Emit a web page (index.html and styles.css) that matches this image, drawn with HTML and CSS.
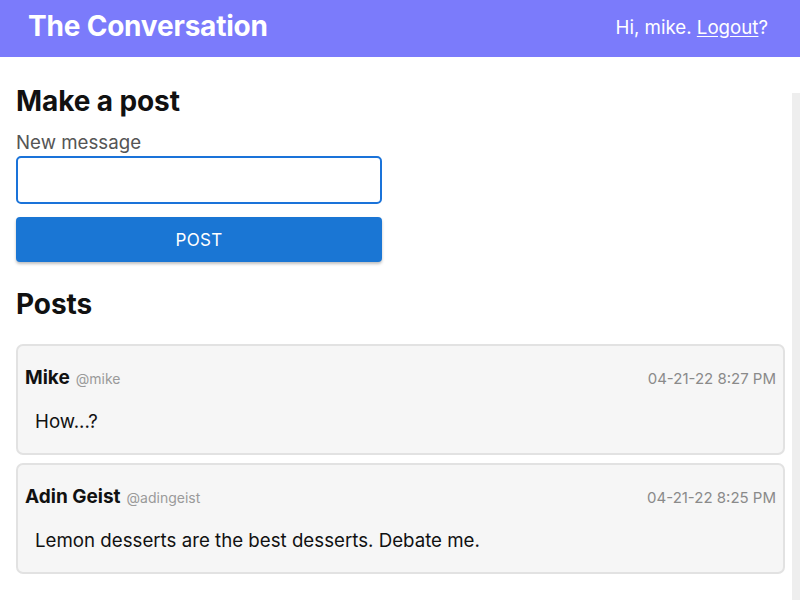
FILE: index.html
```html
<!DOCTYPE html>
<html>
<head>
<meta charset="utf-8">
<link rel="stylesheet" href="styles.css">
</head>
<body>
<header class="topbar">
  <div class="brand">The Conversation</div>
  <div class="user">Hi, mike. <a class="logout" href="#">Logout</a>?</div>
</header>
<div class="page">
  <main class="content">
    <h2 class="heading">Make a post</h2>
    <form class="post-form">
      <label class="label" for="msg">New message</label>
      <input class="input" id="msg" type="text">
      <button class="button" type="button">POST</button>
    </form>
    <h2 class="heading posts-heading">Posts</h2>
    <div class="posts">
      <div class="card">
        <div class="card-head">
          <div class="who"><span class="name">Mike</span><span class="handle">@mike</span></div>
          <div class="date">04-21-22 8:27 PM</div>
        </div>
        <p class="body">How...?</p>
      </div>
      <div class="card">
        <div class="card-head">
          <div class="who"><span class="name">Adin Geist</span><span class="handle">@adingeist</span></div>
          <div class="date">04-21-22 8:25 PM</div>
        </div>
        <p class="body">Lemon desserts are the best desserts. Debate me.</p>
      </div>
    </div>
  </main>
  <div class="track"></div>
</div>
</body>
</html>
```
FILE: styles.css
```css
* { box-sizing: border-box; }
html, body { margin: 0; padding: 0; }
body {
  font-family: Inter, "Noto Sans", "Liberation Sans", sans-serif;
  color: #111;
  background: #fff;
}
.topbar {
  height: 57px;
  background: #7b7bfb;
  display: flex;
  align-items: center;
  justify-content: space-between;
  padding: 0 32px 0 28px;
  color: #fff;
}
.brand {
  font-size: 28px;
  font-weight: 700;
  letter-spacing: -0.2px;
  margin-top: -6px;
}
.user {
  font-size: 18.7px;
  margin-top: -2px;
}
.logout { color: #fff; text-decoration: underline; text-underline-offset: 2px; }
.page {
  display: flex;
  align-items: stretch;
  min-height: 543px;
}
.content {
  flex: 1;
  padding: 0 7px 20px 16px;
}
.track {
  width: 8px;
  margin-top: 36px;
  background: #eeeeee;
}
.heading {
  font-size: 28px;
  font-weight: 700;
  margin: 26px 0 0;
  line-height: 36px;
  letter-spacing: -0.1px;
}
.post-form {
  width: 366px;
  display: flex;
  flex-direction: column;
}
.label {
  font-size: 18.7px;
  color: #555;
  line-height: 22px;
  margin-top: 13px;
}
.input {
  margin-top: 2px;
  height: 48px;
  border: 2px solid #1a73d9;
  border-radius: 5px;
  background: #fff;
  outline: none;
  font: inherit;
}
.button {
  margin-top: 13px;
  height: 45px;
  border: none;
  border-radius: 4px;
  background: #1a76d4;
  color: #fff;
  font-family: inherit;
  font-size: 17px;
  letter-spacing: 0.3px;
  box-shadow: 0 2px 3px rgba(0,0,0,0.25);
}
.posts-heading {
  margin-top: 24px;
}
.posts {
  margin-top: 22px;
  display: flex;
  flex-direction: column;
  gap: 8px;
}
.card {
  background: #f6f6f6;
  border: 2px solid #e2e2e2;
  border-radius: 7px;
  padding: 20px 7px 19px 7px;
}
.card-head {
  display: flex;
  justify-content: space-between;
  align-items: baseline;
  line-height: 24px;
}
.who { display: flex; align-items: baseline; gap: 6px; }
.name { font-size: 19px; font-weight: 700; }
.handle { font-size: 14px; color: #9a9a9a; }
.date { font-size: 15px; color: #8a8a8a; }
.body {
  margin: 19px 0 0 10px;
  font-size: 18.7px;
  line-height: 24px;
}
```
